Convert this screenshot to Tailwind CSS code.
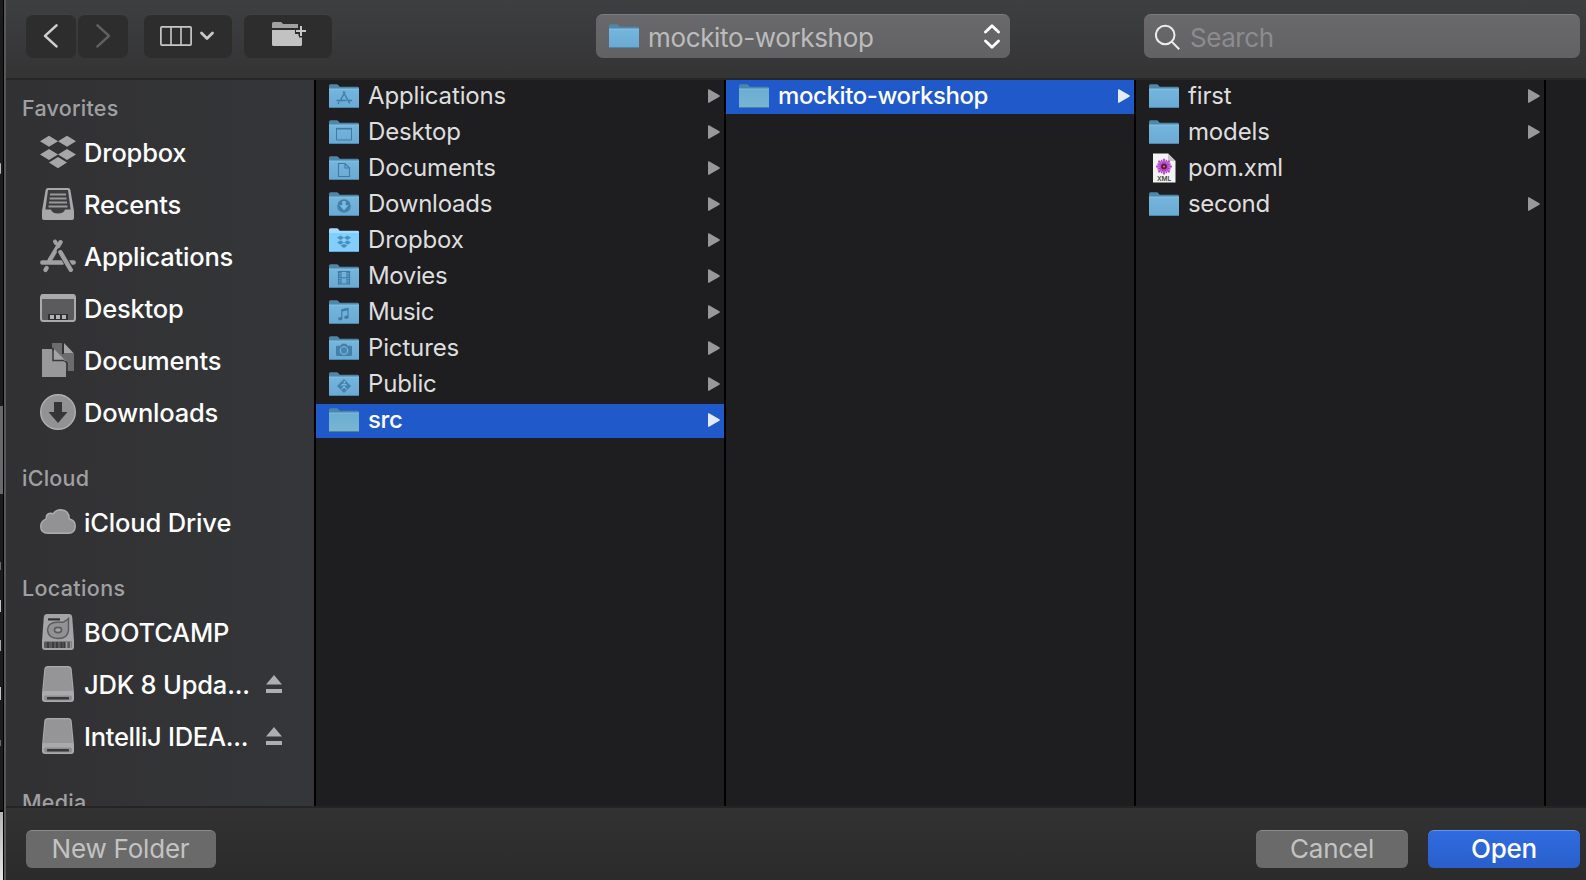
<!DOCTYPE html>
<html lang="en">
<head>
<meta charset="utf-8">
<title>Open</title>
<script src="https://cdn.jsdelivr.net/npm/@tailwindcss/browser@4"></script>
</head>
<body class="w-[1586px] h-[880px] overflow-hidden bg-[#1e1e20] font-['Inter','Liberation_Sans',sans-serif] antialiased">

<svg class="absolute h-0 w-0">
  <defs>
    <linearGradient id="fg" x1="0" y1="0" x2="0" y2="1"><stop offset="0" stop-color="#74b6de"/><stop offset="1" stop-color="#6aa9d2"/></linearGradient>
    <linearGradient id="fgs" x1="0" y1="0" x2="0" y2="1"><stop offset="0" stop-color="#6aaed4"/><stop offset="1" stop-color="#79b5cf"/></linearGradient>
    <linearGradient id="fgb" x1="0" y1="0" x2="0" y2="1"><stop offset="0" stop-color="#7fd0fc"/><stop offset="1" stop-color="#86cdfb"/></linearGradient>
  </defs>
  <symbol id="folder" viewBox="0 0 30 25">
    <path d="M0 1.8Q0 .3 1.5.3H7.6Q8.8.3 9.5 1.2L10.6 2.7H28.6Q30 2.7 30 4.1V8H0Z" fill="#4f87a8"/>
    <path d="M0 4.9H30V22.8Q30 24 28.8 24H1.2Q0 24 0 22.8Z" fill="url(#fg)"/>
    <path d="M0 5H30" stroke="#93c9ea" stroke-width=".8"/>
    <path d="M.4 23.5H29.6" stroke="#4b86ab" stroke-width="1"/>
  </symbol>
  <symbol id="folder-sel" viewBox="0 0 30 25">
    <path d="M0 1.8Q0 .3 1.5.3H7.6Q8.8.3 9.5 1.2L10.6 2.7H28.6Q30 2.7 30 4.1V8H0Z" fill="#4c86ab"/>
    <path d="M0 4.9H30V22.8Q30 24 28.8 24H1.2Q0 24 0 22.8Z" fill="url(#fgs)"/>
    <path d="M0 5H30" stroke="#8fc4dc" stroke-width=".8"/>
    <path d="M.4 23.5H29.6" stroke="#4c83a4" stroke-width="1"/>
  </symbol>
  <symbol id="folder-bright" viewBox="0 0 30 25">
    <path d="M0 1.8Q0 .3 1.5.3H7.6Q8.8.3 9.5 1.2L10.6 2.7H28.6Q30 2.7 30 4.1V8H0Z" fill="#a6dcfb"/>
    <path d="M0 4.9H30V22.8Q30 24 28.8 24H1.2Q0 24 0 22.8Z" fill="url(#fgb)"/>
    <path d="M.4 23.5H29.6" stroke="#62a9d8" stroke-width="1"/>
  </symbol>
  <symbol id="tri" viewBox="0 0 12 14"><path d="M0 .8Q0-.2 1 .3L11.4 6.3Q12.2 7 11.4 7.7L1 13.7Q0 14.2 0 13.2Z" fill="currentColor"/></symbol>
  <symbol id="drive" viewBox="0 0 32 36">
    <path d="M6 0H26Q29.3 0 29.7 3L32 27V33Q32 36 29 36H3Q0 36 0 33V27L2.3 3Q2.7 0 6 0Z" fill="#aaaaac"/>
    <path d="M6.2 1.2H25.8Q28.3 1.2 28.6 3.4L30.8 25H1.2L3.4 3.4Q3.7 1.2 6.2 1.2Z" fill="#959597"/>
    <rect x="2" y="29.5" width="28" height="5" rx="1.8" fill="#8e8e90"/>
    <rect x="5" y="31" width="22" height="2.4" rx=".5" fill="#39393b"/>
  </symbol>
  <symbol id="eject" viewBox="0 0 16 18"><path d="M8 0L16 9.6H0ZM0 14H16V18H0Z" fill="#aeaeb0"/></symbol>
</svg>

<div class="flex h-full w-full">
  <!-- sliver of the window behind the dialog -->
  <div class="flex h-full w-[4px] shrink-0 flex-col items-start border-r border-black bg-[#1b1b1b]">
    <div class="mt-[163px] h-[11px] w-px rounded-r-full bg-[#b8b8b8]"></div>
    <div class="mt-[232px] h-[88px] w-full bg-[#69696a]"></div>
    <div class="mt-[68px] h-[8px] w-px bg-[#6a6a6a]"></div>
    <div class="mt-[30px] h-[12px] w-px bg-[#c4c4c4]"></div>
    <div class="mt-[28px] h-[11px] w-px bg-[#a8a8a8]"></div>
    <div class="mt-[36px] h-[13px] w-px bg-[#c4c4c4]"></div>
    <div class="mt-[40px] h-[6px] w-px bg-[#6a6a6a]"></div>
    <div class="mt-[64px] h-[2px] w-full bg-black"></div>
    <div class="w-full grow bg-linear-to-b from-[#b5b5b5] to-[#e6e6e6]"></div>
  </div>

  <div class="flex h-full min-w-0 grow flex-col border-l-2 border-[#58585a]">
    <!-- toolbar -->
    <header class="flex h-[80px] shrink-0 items-start border-b-2 border-[#272728] bg-linear-to-b from-[#3e3f41] to-[#343435] pt-[14px] pl-[20px]">
      <div class="flex gap-[2px]">
        <div class="h-[44px] w-[50px] rounded-[7px] border-t border-[#414143] bg-[#2d2d2e]">
          <svg class="size-full" viewBox="0 0 50 43" fill="none"><path d="M30.500 10.400L19 20.900L30.500 31.400" stroke="#cfcfcf" stroke-width="2.600" stroke-linecap="round" stroke-linejoin="round"/></svg>
        </div>
        <div class="h-[44px] w-[50px] rounded-[7px] border-t border-[#414143] bg-[#2d2d2e]">
          <svg class="size-full" viewBox="0 0 50 43" fill="none"><path d="M19.500 10.400L31 20.900L19.500 31.400" stroke="#606061" stroke-width="2.600" stroke-linecap="round" stroke-linejoin="round"/></svg>
        </div>
      </div>
      <div class="ml-[16px] h-[44px] w-[88px] rounded-[7px] border-t border-[#414143] bg-[#2d2d2e]">
        <svg class="size-full" viewBox="0 0 88 43" fill="none" stroke="#c8c8c8"><rect x="16.900" y="11.900" width="30.200" height="18.200" rx="1" stroke-width="1.700"/><path d="M27 12V30M37 12V30" stroke-width="1.600"/><path d="M57.500 18L63 23.500L68.500 18" stroke-width="2.800" stroke-linecap="round" stroke-linejoin="round"/></svg>
      </div>
      <div class="ml-[12px] h-[44px] w-[88px] rounded-[7px] border-t border-[#414143] bg-[#2d2d2e]">
        <svg class="size-full" viewBox="0 0 88 43"><path d="M28 8.500Q28 7 29.500 7H36.500Q37.500 7 38 7.700L39 9H54V13H28Z" fill="#a2a2a2"/><path d="M28 15H51V19H55V22.500H58V29.500Q58 31 56.500 31H29.500Q28 31 28 29.500Z" fill="#c2c2c2"/><path d="M57 11V21M52 16H62" stroke="#2d2d2e" stroke-width="5"/><path d="M57 11V21M52 16H62" stroke="#c8c8c8" stroke-width="2"/></svg>
      </div>
      <div class="ml-[264px] flex h-[44px] w-[414px] items-center rounded-[7px] border-t border-[#7c7c7e] bg-linear-to-b from-[#69696b] to-[#626264] pr-[9px] pl-[13px]">
        <svg class="h-[25px] w-[30px]"><use href="#folder"/></svg>
        <span class="ml-[9px] pt-px text-[26px] tracking-[-0.35px] text-[#bcbcbd]">mockito-workshop</span>
        <svg class="ml-auto h-[26px] w-[18px]" viewBox="0 0 18 26" fill="none" stroke="#fff" stroke-width="2.800" stroke-linecap="round" stroke-linejoin="round"><path d="M2.500 8L9 1.700L15.500 8M2.500 17L9 23.300L15.500 17"/></svg>
      </div>
      <div class="ml-[134px] flex h-[44px] w-[436px] items-center rounded-[7px] border-t border-[#7c7c7e] bg-linear-to-b from-[#69696b] to-[#626264] pl-[11px]">
        <svg class="size-[26px]" viewBox="0 0 26 26" fill="none" stroke="#ececec" stroke-width="2"><circle cx="10.200" cy="11" r="9.300"/><path d="M16.700 17.600L24.200 25.200"/></svg>
        <span class="ml-[9px] pt-px text-[26px] tracking-[-0.45px] text-[#8c8c8e]">Search</span>
      </div>
    </header>

    <div class="flex min-h-0 grow">
      <!-- sidebar -->
      <nav class="w-[310px] shrink-0 overflow-hidden border-r-2 border-black bg-linear-to-r from-[#313133] to-[#353639] pt-[9px]">
        <h2 class="flex h-[38px] items-center pl-[16px] text-[21.500px] font-medium tracking-[0.25px] text-[#a0a0a2]">Favorites</h2>
        <ul class="text-[25.500px] font-medium tracking-[-0.2px] text-white">
          <li class="flex h-[52px] items-center pl-[34px]"><svg class="mr-[8px] size-[36px] overflow-visible" viewBox="0 0 36 36" fill="#a6a6a8"><path d="M9 .8L18 6.300L9 11.800L0 6.300ZM27 .8L36 6.300L27 11.800L18 6.300ZM9 14L18 19.500L9 25L0 19.500ZM27 14L36 19.500L27 25L18 19.500ZM18 22L27 27.500L18 33.300L9 27.500Z"/></svg>Dropbox</li>
          <li class="flex h-[52px] items-center pl-[34px]"><svg class="mr-[8px] size-[36px] overflow-visible" viewBox="0 0 36 36"><path d="M8 1H28Q30 1 30.400 3L34 24V31Q34 33 32 33H4Q2 33 2 31V24L5.600 3Q6 1 8 1Z" fill="#a8a8aa"/><path d="M8 3H28L30.600 22.500H25Q24 26.500 18 26.500Q12 26.500 11 22.500H5.400Z" fill="#3c3c3e"/><path d="M10 7.500H26M9.500 11.500H26.500M9 15.500H27M8.500 19.500H27.500" stroke="#98989a" stroke-width="1.900"/></svg>Recents</li>
          <li class="flex h-[52px] items-center pl-[34px]"><svg class="mr-[8px] size-[36px] overflow-visible" viewBox="0 0 36 36" fill="none" stroke="#a0a0a2" stroke-linecap="round"><path d="M2.300 23.500H22.500M29 23.500H33.700" stroke-width="4.400"/><path d="M20.500 3.200L9.800 21" stroke-width="4.400"/><path d="M6.700 29L5.400 31" stroke-width="4.200"/><path d="M15 2.500L16 4.200" stroke-width="4"/><path d="M20 12L31 30.800" stroke="#323234" stroke-width="6.400"/><path d="M20.400 13.200L30.800 30.800" stroke-width="4.400"/></svg>Applications</li>
          <li class="flex h-[52px] items-center pl-[34px]"><svg class="mr-[8px] size-[36px] overflow-visible" viewBox="0 0 36 36"><rect x="1" y="4" width="34" height="26" rx="2.500" fill="#5b5b5d" stroke="#aaaaac" stroke-width="2"/><path d="M1 3.500H35V8H1Z" fill="#aaaaac"/><rect x="8" y="23" width="20" height="6" fill="#2f2f31"/><path d="M10 24H14V28H10ZM16 24H20V28H16ZM22 24H26V28H22Z" fill="#b4b4b6"/></svg>Desktop</li>
          <li class="flex h-[52px] items-center pl-[34px]"><svg class="mr-[8px] size-[36px] overflow-visible" viewBox="0 0 36 36"><path d="M12 0H22V11H34V28H12Z" fill="#6c6c6e"/><path d="M24 0L34 10.500H24Z" fill="#a4a4a6"/><path d="M2 6H14L26 18V34H2Z" fill="#98989a"/><path d="M11 4.500L27 20V29" fill="none" stroke="#323234" stroke-width="1.500"/><path d="M14 6V18H26Z" fill="#a4a4a6"/><path d="M13 5V17.500H24.500" fill="none" stroke="#3a3a3c" stroke-width="1.500"/></svg>Documents</li>
          <li class="flex h-[52px] items-center pl-[34px]"><svg class="mr-[8px] size-[36px] overflow-visible" viewBox="0 0 36 36"><circle cx="18" cy="17" r="17.300" fill="#929294" stroke="#b0b0b2" stroke-width="1.400"/><path d="M14 7H22V17H27.500L18 28L8.500 17H14Z" fill="#353537"/></svg>Downloads</li>
        </ul>
        <h2 class="mt-[20px] flex h-[38px] items-center pl-[16px] text-[21.500px] font-medium tracking-[0.25px] text-[#a0a0a2]">iCloud</h2>
        <ul class="text-[25.500px] font-medium tracking-[-0.15px] text-white">
          <li class="flex h-[52px] items-center pl-[34px]"><svg class="mr-[8px] size-[36px] overflow-visible" viewBox="0 0 36 36"><path d="M8 28.300Q.7 28 .7 21.500Q.8 16 6 14.200Q5.700 8.700 10.500 8.300Q12 8.200 13.200 8.900Q15.500 4.700 20.800 4.700Q29.300 5 29.300 14Q35.200 15 35.300 21.200Q35 28 28.500 28.300Z" fill="#929294" stroke="#acacae" stroke-width="1.400"/></svg>iCloud Drive</li>
        </ul>
        <h2 class="mt-[20px] flex h-[38px] items-center pl-[16px] text-[21.500px] font-medium tracking-[0.35px] text-[#a0a0a2]">Locations</h2>
        <ul class="text-[25.500px] font-medium tracking-[-0.2px] text-white">
          <li class="flex h-[52px] items-center pl-[36px]"><svg class="mr-[10px] mb-[2px] h-[36px] w-[32px]" viewBox="0 0 32 36"><path d="M5 0H27Q29.800 0 30.200 3L32 27V33Q32 36 29 36H3Q0 36 0 33V27L1.800 3Q2.200 0 5 0Z" fill="#a4a4a6"/><path d="M6 4.300H18V6.500H6Z" fill="#333335"/><path d="M26.500 4.500V16Q26 24.500 16 24.500Q6 24 5.500 16Q6 8.500 15 8.300Q20 8.300 21.500 8Q24 7 26.500 4.500Z" fill="#929294" stroke="#5c5c5e" stroke-width="1.500"/><ellipse cx="16" cy="16" rx="3.600" ry="2.600" fill="#a4a4a6" stroke="#5c5c5e" stroke-width="1.600"/><rect x="2" y="27.500" width="28" height="6.500" rx="1" fill="#59595b"/><path d="M6 28V34M11 28V34M15 28V34M19.500 28V34M22.500 28V34" stroke="#3a3a3c" stroke-width="1.800"/><path d="M24.500 28V34M28.800 28V34" stroke="#9a9a9c" stroke-width="1.600"/></svg>BOOTCAMP</li>
          <li class="flex h-[52px] items-center pr-[32px] pl-[36px]"><svg class="mr-[10px] mb-[2px] h-[36px] w-[32px]"><use href="#drive"/></svg>JDK 8 Upda...<svg class="mb-[3px] ml-auto h-[18px] w-[16px]"><use href="#eject"/></svg></li>
          <li class="flex h-[52px] items-center pr-[32px] pl-[36px]"><svg class="mr-[10px] mb-[2px] h-[36px] w-[32px]"><use href="#drive"/></svg><span class="tracking-[-0.27px]">IntelliJ IDEA...</span><svg class="mb-[3px] ml-auto h-[18px] w-[16px]"><use href="#eject"/></svg></li>
        </ul>
        <h2 class="mt-[20px] flex h-[38px] items-center pl-[16px] text-[21.500px] font-medium tracking-[0.25px] text-[#a0a0a2]">Media</h2>
      </nav>

      <!-- column: home -->
      <ul class="flex w-[410px] shrink-0 flex-col gap-[2px] border-r-2 border-black text-[24px] tracking-[-0.15px] text-[#dededf] *:flex *:h-[34px] *:items-center *:pr-[4px] *:pb-[2px] *:pl-[13px]">
        <li><svg class="h-[25px] w-[30px]" viewBox="0 0 30 25"><use href="#folder"/><path d="M16 8L11 17M14.300 8L20.500 19M8 16.500H17M19.500 16.500H22.500M9.800 18.500L9.300 19.500" stroke="#3f7ba5" stroke-width="1.400" fill="none" stroke-linecap="round"/></svg><span class="ml-[9px]">Applications</span><svg class="ml-auto h-[14px] w-[12px] text-[#98989a]"><use href="#tri"/></svg></li>
        <li><svg class="h-[25px] w-[30px]" viewBox="0 0 30 25"><use href="#folder"/><path d="M7.500 8.500H22.500V20H7.500Z" stroke="#3f7ba5" fill="none"/><path d="M7 8.700H23" stroke="#3f7ba5" stroke-width="1.600"/></svg><span class="ml-[9px]">Desktop</span><svg class="ml-auto h-[14px] w-[12px] text-[#98989a]"><use href="#tri"/></svg></li>
        <li><svg class="h-[25px] w-[30px]" viewBox="0 0 30 25"><use href="#folder"/><path d="M9.500 7.500H16L20.500 12V20.500H9.500ZM16 7.500V12H20.500" stroke="#3f7ba5" stroke-width="1.100" fill="none"/></svg><span class="ml-[9px]">Documents</span><svg class="ml-auto h-[14px] w-[12px] text-[#98989a]"><use href="#tri"/></svg></li>
        <li><svg class="h-[25px] w-[30px]" viewBox="0 0 30 25"><use href="#folder"/><circle cx="15" cy="14" r="6.800" fill="#4580aa"/><path d="M13.300 9H16.700V13.300H19.500L15 18.500L10.500 13.300H13.300Z" fill="#7bbbe2"/></svg><span class="ml-[9px] tracking-[-0.25px]">Downloads</span><svg class="ml-auto h-[14px] w-[12px] text-[#98989a]"><use href="#tri"/></svg></li>
        <li><svg class="h-[25px] w-[30px]" viewBox="0 0 30 25"><use href="#folder-bright"/><path d="M11.500 7.500L15 9.700L11.500 11.900L8 9.700ZM18.500 7.500L22 9.700L18.500 11.900L15 9.700ZM11.500 12.300L15 14.500L11.500 16.700L8 14.500ZM18.500 12.300L22 14.500L18.500 16.700L15 14.500ZM15 15.700L18.500 17.800L15 20L11.500 17.800Z" fill="#4b90c0"/></svg><span class="ml-[9px]">Dropbox</span><svg class="ml-auto h-[14px] w-[12px] text-[#98989a]"><use href="#tri"/></svg></li>
        <li><svg class="h-[25px] w-[30px]" viewBox="0 0 30 25"><use href="#folder"/><path d="M9.500 7.500H20.500V20H9.500ZM12 7.500V20M18 7.500V20M12 13.700H18" stroke="#3f7ba5" stroke-width="1.100" fill="none"/><path d="M10.700 8V20M19.300 8V20" stroke="#3f7ba5" stroke-width="1.600" stroke-dasharray="1.300 1"/></svg><span class="ml-[9px] tracking-[-0.4px]">Movies</span><svg class="ml-auto h-[14px] w-[12px] text-[#98989a]"><use href="#tri"/></svg></li>
        <li><svg class="h-[25px] w-[30px]" viewBox="0 0 30 25"><use href="#folder"/><path d="M12.800 18.500V9.800L19 8.500V17" stroke="#3f7ba5" stroke-width="1.200" fill="none"/><path d="M12.800 10.600L19 9.300" stroke="#3f7ba5" stroke-width="2"/><ellipse cx="11.200" cy="18.800" rx="2.100" ry="1.700" fill="#3f7ba5"/><ellipse cx="17.400" cy="17.300" rx="2.100" ry="1.700" fill="#3f7ba5"/></svg><span class="ml-[9px] tracking-[-0.4px]">Music</span><svg class="ml-auto h-[14px] w-[12px] text-[#98989a]"><use href="#tri"/></svg></li>
        <li><svg class="h-[25px] w-[30px]" viewBox="0 0 30 25"><use href="#folder"/><path d="M8 9.800H11.500L12.800 7.800H17.200L18.500 9.800H22Q23 9.800 23 10.800V19Q23 20 22 20H8Q7 20 7 19V10.800Q7 9.800 8 9.800Z" fill="#4580aa"/><circle cx="15" cy="14.500" r="3.800" fill="#4a87b0" stroke="#7bbbe2" stroke-width="1.100"/></svg><span class="ml-[9px]">Pictures</span><svg class="ml-auto h-[14px] w-[12px] text-[#98989a]"><use href="#tri"/></svg></li>
        <li><svg class="h-[25px] w-[30px]" viewBox="0 0 30 25"><use href="#folder"/><path d="M15 7L22 14L15 21L8 14Z" fill="#4580aa"/><path d="M15 11.500V14.500L12.500 17.500M15 14.500L17.500 17.300M12 13.500L15 11.800L18 13.300" stroke="#7bbbe2" stroke-width="1.100" fill="none"/><circle cx="15.500" cy="10" r="1" fill="#7bbbe2"/></svg><span class="ml-[9px]">Public</span><svg class="ml-auto h-[14px] w-[12px] text-[#98989a]"><use href="#tri"/></svg></li>
        <li class="bg-[#2059c9] font-medium text-white"><svg class="h-[25px] w-[30px]"><use href="#folder-sel"/></svg><span class="ml-[9px] tracking-[-0.4px]">src</span><svg class="ml-auto h-[14px] w-[12px] text-[#e4ebf8]"><use href="#tri"/></svg></li>
      </ul>

      <!-- column: src -->
      <ul class="flex w-[410px] shrink-0 flex-col gap-[2px] border-r-2 border-black text-[24px] text-[#dededf] *:flex *:h-[34px] *:items-center *:pr-[4px] *:pb-[2px] *:pl-[13px]">
        <li class="bg-[#2059c9] font-medium text-white"><svg class="h-[25px] w-[30px]"><use href="#folder-sel"/></svg><span class="ml-[9px] tracking-[-0.4px]">mockito-workshop</span><svg class="ml-auto h-[14px] w-[12px] text-[#e4ebf8]"><use href="#tri"/></svg></li>
      </ul>

      <!-- column: mockito-workshop -->
      <ul class="flex w-[410px] shrink-0 flex-col gap-[2px] border-r-2 border-black text-[24px] tracking-[-0.15px] text-[#dededf] *:flex *:h-[34px] *:items-center *:pr-[4px] *:pb-[2px] *:pl-[13px]">
        <li><svg class="h-[25px] w-[30px]"><use href="#folder"/></svg><span class="ml-[9px]">first</span><svg class="ml-auto h-[14px] w-[12px] text-[#98989a]"><use href="#tri"/></svg></li>
        <li><svg class="h-[25px] w-[30px]"><use href="#folder"/></svg><span class="ml-[9px]">models</span><svg class="ml-auto h-[14px] w-[12px] text-[#98989a]"><use href="#tri"/></svg></li>
        <li><svg class="h-[30px] w-[30px]" viewBox="0 0 30 30"><path d="M4 .5H19L26.500 8V29.500H4Z" fill="#f4f4f4"/><path d="M19 .5L26.500 8H19Z" fill="#c4c4c8"/><g stroke="#c04fd0" stroke-width="2.400" stroke-linecap="round"><path d="M15 6.600V20.400M8.100 13.500H21.900M10.100 8.600L19.900 18.400M19.900 8.600L10.100 18.400"/><path d="M12.400 7.300L17.600 19.700M17.600 7.300L12.400 19.700M8.800 10.900L21.200 16.100M21.200 10.900L8.800 16.100" stroke="#a63fbb" stroke-width="1.300"/></g><circle cx="15" cy="13.500" r="2.800" fill="#5a1446"/><circle cx="15" cy="13.500" r="1" fill="#e08a3a"/><text x="15" y="28" text-anchor="middle" font-size="6.500" font-weight="600" fill="#444">XML</text></svg><span class="ml-[9px] tracking-[-0.3px]">pom.xml</span></li>
        <li><svg class="h-[25px] w-[30px]"><use href="#folder"/></svg><span class="ml-[9px] tracking-[-0.3px]">second</span><svg class="ml-auto h-[14px] w-[12px] text-[#98989a]"><use href="#tri"/></svg></li>
      </ul>
    </div>

    <!-- footer -->
    <footer class="flex h-[74px] shrink-0 items-start border-t-2 border-[#242425] bg-linear-to-b from-[#323233] to-[#2b2b2c] pt-[22px] pr-[6px] pl-[20px] text-[26px] tracking-[-0.2px] text-[#c3c3c3]">
      <button class="flex h-[38px] w-[190px] items-center justify-center rounded-[6px] border-t border-[#8c8c8c] bg-[#6a6a6a] pr-px pb-[2px]">New Folder</button>
      <button class="ml-auto flex h-[38px] w-[152px] items-center justify-center rounded-[6px] border-t border-[#8c8c8c] bg-[#6a6a6a] pb-[2px]">Cancel</button>
      <button class="ml-[20px] flex h-[38px] w-[152px] items-center justify-center rounded-[6px] border-t border-[#6a95ea] bg-linear-to-b from-[#2f6be0] to-[#2a5fcb] pb-[2px] font-medium text-white">Open</button>
    </footer>
  </div>
</div>
</body>
</html>
